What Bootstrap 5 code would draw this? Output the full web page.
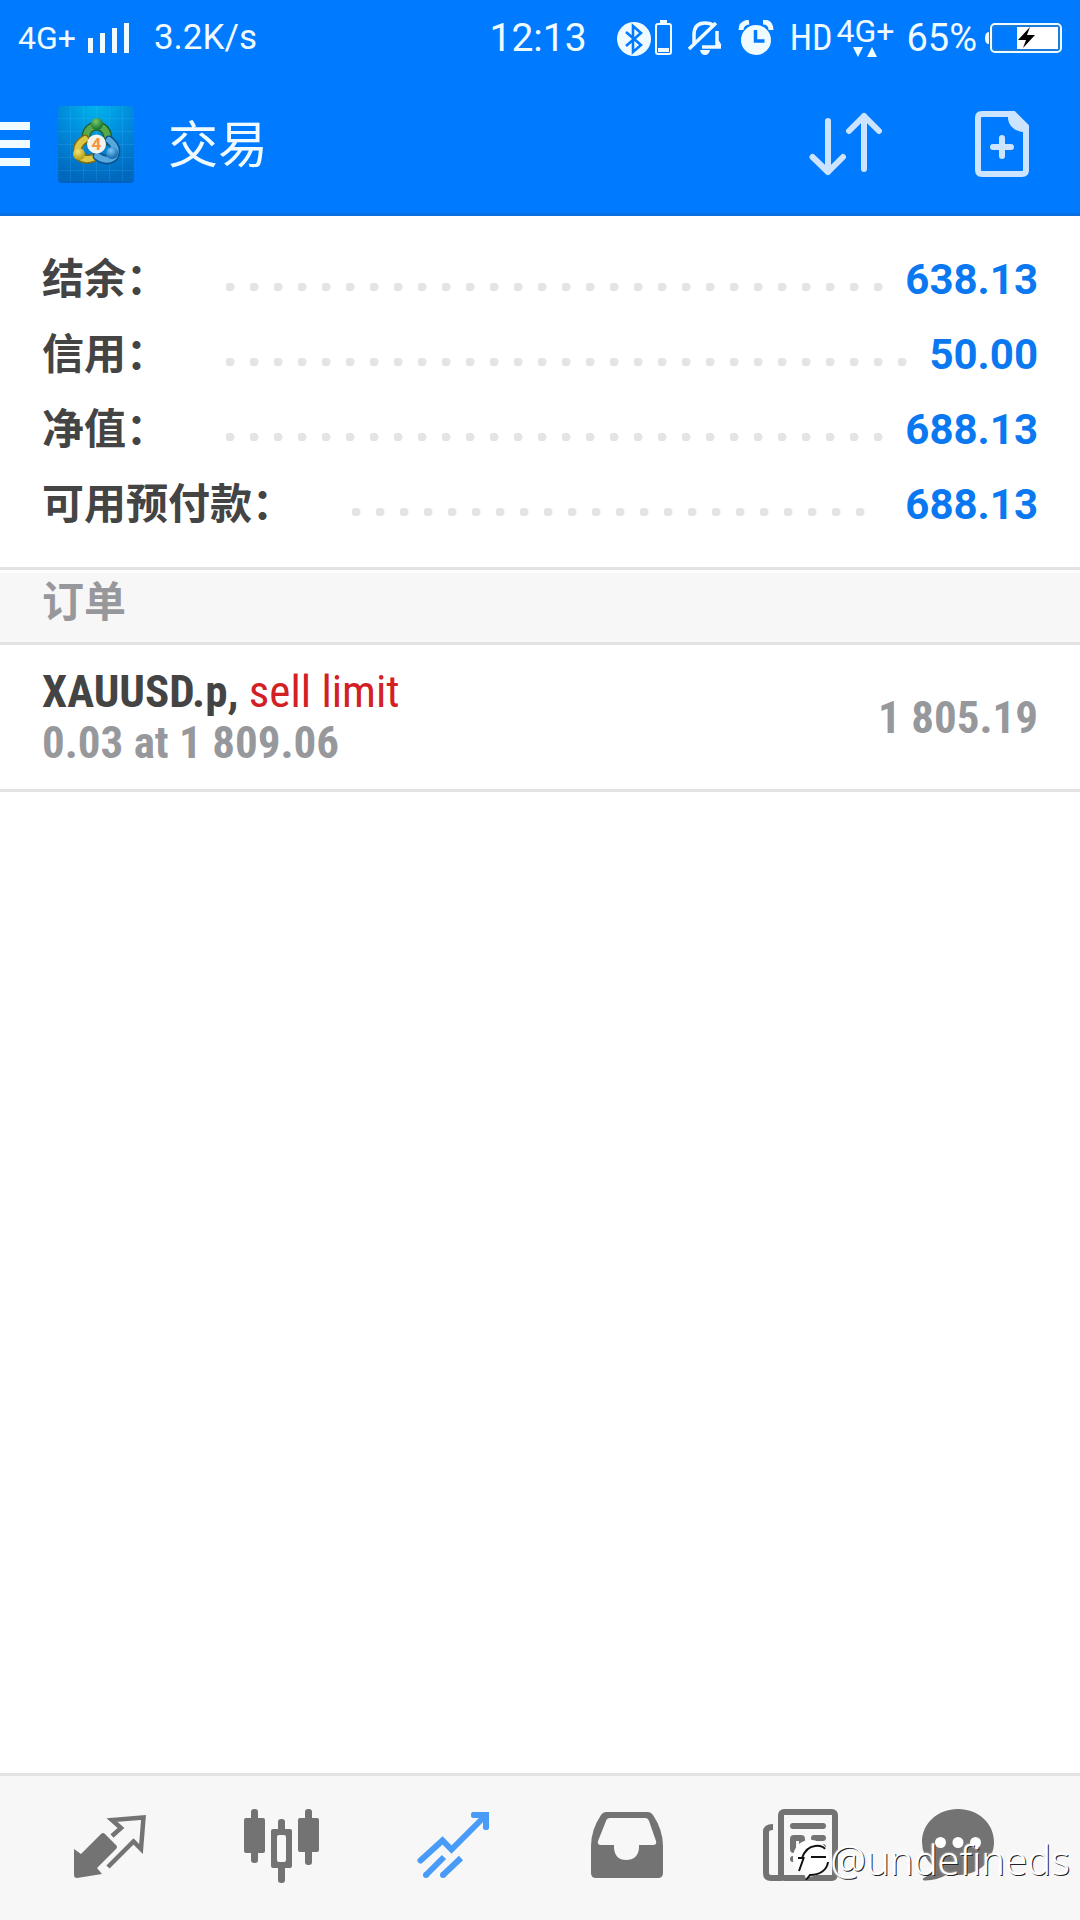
<!DOCTYPE html>
<html lang="zh-CN">
<head>
<meta charset="utf-8">
<meta name="viewport" content="width=device-width, initial-scale=1">
<title>交易</title>
<link rel="stylesheet" href="https://cdn.jsdelivr.net/npm/bootstrap@5.3.0/dist/css/bootstrap.min.css">
<style>
body{font-family:Roboto,"Noto Sans CJK SC",sans-serif;color:#444;background:#fff}
svg{display:block;flex:none}
.top-area{background:#007aff;border-bottom:3px solid #0a6fe0;color:#f0fbff}
.status-line{height:75px;padding:0 18px;font-size:35px;line-height:40px}
.net-type{font-size:32px;line-height:32px}
.clock-text{font-size:39px;margin-right:30px}
.charge-text{font-size:38px;margin-left:12px}
.hd-text{font-size:36px;font-family:"Roboto Condensed","Liberation Sans Narrow",Roboto,sans-serif;font-weight:400}
.title-line{height:138px;padding-right:51px}
.title-line h1{font-size:50px;line-height:72px;font-weight:400;padding:4px 0 0 34px}
.plain-btn{background:none;border:0;padding:0;color:inherit}
.menu-btn{margin-right:28px}
.right-tools{gap:92px;color:#cce4ff}
.summary{padding:26px 42px 25px;border-bottom:3px solid #e3e3e3}
.sum-row{height:75px;font-size:42px;line-height:60px}
.sum-row dt{font-weight:700}
.sum-row dd{color:#0a78f0;font-weight:700}
.dots-wrap{margin:14px 4px 0 58px;height:8px;min-width:0}
.dots{height:8px;width:100%;width:round(down,100%,24px);background:radial-gradient(circle at 4px 4px,#e4e4e4 3px,#e4e4e4 4px,transparent 5px) 0 0/24px 8px repeat-x}
.group-head{background:#f7f7f7;border-top:3px solid #fff;border-bottom:3px solid #e3e3e3;height:75px;padding:0 42px 10px}
.group-head h2{font-size:42px;line-height:59px;font-weight:700;color:#97989c}
.order-row{height:147px;padding:0 42px;border-bottom:3px solid #e3e3e3;font-family:"Roboto Condensed","Liberation Sans Narrow",Roboto,sans-serif;font-size:45px;line-height:51px;font-weight:700}
.muted-num{color:#97989c}
.sell{color:#d32024;font-weight:400}
.tab-bar{height:147px;border-top:3px solid #e3e3e3;background:#f7f7f7;padding:0 24px;color:#737373}
.tab-bar a{color:inherit}
.tab-bar a.current{color:#489cf7}
.watermark{right:10px;bottom:34px;font-family:"Noto Sans","Open Sans",sans-serif;font-weight:300;font-size:40px;line-height:52px;color:#fff;text-shadow:1px 1px 0 #222,0 0 2px #fff;pointer-events:none}
</style>
</head>
<body class="d-flex flex-column min-vh-100">
<header class="top-area">
  <div class="status-line d-flex align-items-center">
    <span class="net-type">4G+</span>
    <svg class="ms-2" width="46" height="30" viewBox="0 0 46 30" fill="currentColor"><path d="M4 15h5v15H4zM16 10h5v20h-5zM28 5h5v25h-5zM40 0h5v30h-5z"/></svg>
    <span class="ms-4">3.2K/s</span>
    <span class="clock-text ms-auto">12:13</span>
    <svg width="157" height="36" viewBox="0 0 157 36" fill="none" stroke="currentColor">
      <circle cx="17" cy="19" r="17" fill="currentColor" stroke="none"/>
      <path d="M9 12l15 13-8 7V6l8 7L9 26" stroke="#007aff" stroke-width="2.6"/>
      <path d="M43 1.500h7" stroke-width="3"/><rect x="39" y="4" width="15" height="30" rx="2" stroke-width="2"/><path d="M41 30h11" stroke-width="4"/>
      <path d="M77 23V15q0-12 11-12 5 0 8 2M100 11v15M85 27h19M100 21l3 5" stroke-width="3.500"/><path d="M72 29L99 3" stroke-width="3.500"/><path d="M83 30h10q-1 5-5 5t-5-5" fill="currentColor" stroke="none"/>
      <circle cx="139" cy="20" r="15" fill="currentColor" stroke="none"/><path d="M124 10q0-7 8-8M146 2q8 0 8 8" stroke-width="5"/><path d="M138.500 10v11h9" stroke="#007aff" stroke-width="3.500"/>
    </svg>
    <span class="hd-text ms-3">HD</span>
    <span class="net-type ms-1 mb-1 d-flex flex-column align-items-center">4G+
      <svg width="24" height="10" viewBox="0 0 24 10" fill="currentColor"><path d="M0 0h10L5 10zM14 10h10L19 0z"/></svg></span>
    <span class="charge-text">65%</span>
    <svg class="ms-2" width="77" height="30" viewBox="0 0 77 30"><path d="M4 9q-4 0-4 6t4 6z" fill="currentColor"/><rect x="6" y="1" width="70" height="28" rx="4" fill="none" stroke="currentColor" stroke-width="2"/><rect x="8" y="3" width="66" height="24" rx="2" fill="none" stroke="#397fb0" stroke-width="1"/><path d="M32 4h41v22H32z" fill="#fff"/><path d="M45 4L33 17h8l-3 8 12-13h-8z" fill="#000"/></svg>
  </div>
  <div class="title-line d-flex align-items-center">
    <button class="plain-btn menu-btn" type="button" aria-label="菜单"><svg width="30" height="44" viewBox="0 0 30 44" fill="currentColor"><path d="M0 0h30v8H0zM0 18h30v8H0zM0 36h30v8H0z"/></svg></button>
    <svg width="76" height="77" viewBox="0 0 76 77">
      <defs>
        <radialGradient id="sky" cx=".5" cy="0" r="1"><stop offset="0" stop-color="#00b3ea"/><stop offset=".5" stop-color="#0089dc"/><stop offset="1" stop-color="#0068bd"/></radialGradient>
        <radialGradient id="gr" cx=".4" cy=".3" r=".7"><stop offset="0" stop-color="#79c96b"/><stop offset="1" stop-color="#12702c"/></radialGradient>
        <radialGradient id="ye" cx=".4" cy=".3" r=".7"><stop offset="0" stop-color="#f3e576"/><stop offset="1" stop-color="#b39a12"/></radialGradient>
        <radialGradient id="bl" cx=".4" cy=".3" r=".7"><stop offset="0" stop-color="#7cc8f4"/><stop offset="1" stop-color="#0f66ad"/></radialGradient>
      </defs>
      <rect y="2" width="76" height="75" rx="4" fill="#0060bd"/><rect width="76" height="75" rx="4" fill="url(#sky)"/>
      <path d="M12.500 0v75M25.500 0v75M38.500 0v75M51.500 0v75M64.500 0v75M0 12.500h76M0 25.500h76M0 38.500h76M0 51.500h76M0 64.500h76" stroke="#5cc4f5" stroke-opacity=".16"/>
      <g fill="none" stroke-linecap="round">
        <path d="M28 34q-1-13 11-14 11 1 11 15" stroke="#1c6428" stroke-width="9"/><path d="M28 34q-1-13 11-14 11 1 11 15" stroke="#58a94d" stroke-width="6"/>
        <path d="M27 33q-11 7-6 17 5 5 14 2" stroke="#806d12" stroke-width="9"/><path d="M27 33q-11 7-6 17 5 5 14 2" stroke="#dcc646" stroke-width="6"/>
        <path d="M51 34q10 8 5 17-7 6-17-1" stroke="#0b518d" stroke-width="9"/><path d="M51 34q10 8 5 17-7 6-17-1" stroke="#55a9df" stroke-width="6"/>
      </g>
      <circle cx="39" cy="18" r="6" fill="url(#gr)"/><circle cx="21" cy="48" r="6" fill="url(#ye)"/><circle cx="54" cy="47" r="6" fill="url(#bl)"/>
      <circle cx="38.500" cy="38" r="9.500" fill="#f2f2ee"/>
      <text x="38.500" y="44" text-anchor="middle" font-family="Roboto,sans-serif" font-weight="700" font-size="17" fill="#f5933f">4</text>
    </svg>
    <h1 class="m-0">交易</h1>
    <div class="right-tools d-flex align-items-center ms-auto">
      <button class="plain-btn" type="button" aria-label="排序"><svg width="74" height="66" viewBox="0 0 74 66" fill="none" stroke="currentColor" stroke-width="6" stroke-linecap="round" stroke-linejoin="round"><path d="M19 10v51M3.500 46L19 61l15-15M55 58V5M40 20L55 5l15 15"/></svg></button>
      <button class="plain-btn" type="button" aria-label="新订单"><svg width="54" height="66" viewBox="0 0 54 66" fill="none" stroke="currentColor"><path d="M7 3h31.500L51 15.500V59q0 4-4 4H7q-4 0-4-4V7q0-4 4-4z" stroke-width="6"/><path d="M33 3h7l12 12v6q-8 1-14-4-6-5-5-14z" fill="currentColor" stroke="none"/><path d="M27 27v18M18 36h18" stroke-width="6" stroke-linecap="round"/></svg></button>
    </div>
  </div>
</header>
<main class="flex-grow-1">
  <dl class="summary m-0">
    <div class="sum-row d-flex align-items-center"><dt>结余：</dt><div class="dots-wrap flex-grow-1"><div class="dots"></div></div><dd class="m-0">638.13</dd></div>
    <div class="sum-row d-flex align-items-center"><dt>信用：</dt><div class="dots-wrap flex-grow-1"><div class="dots"></div></div><dd class="m-0">50.00</dd></div>
    <div class="sum-row d-flex align-items-center"><dt>净值：</dt><div class="dots-wrap flex-grow-1"><div class="dots"></div></div><dd class="m-0">688.13</dd></div>
    <div class="sum-row d-flex align-items-center"><dt>可用预付款：</dt><div class="dots-wrap flex-grow-1"><div class="dots"></div></div><dd class="m-0">688.13</dd></div>
  </dl>
  <div class="group-head"><h2 class="m-0">订单</h2></div>
  <div class="order-row d-flex align-items-center justify-content-between">
    <div><div>XAUUSD.p, <span class="sell">sell limit</span></div><div class="muted-num">0.03 at 1 809.06</div></div>
    <div class="muted-num">1 805.19</div>
  </div>
</main>
<nav class="tab-bar d-flex align-items-center position-relative">
  <a href="#" class="d-flex justify-content-center flex-fill" aria-label="行情"><svg width="96" height="96" viewBox="0 0 96 96"><path d="M12 49l7 5 20-20q2-2 4 0l11 11q2 2 0 4L35 68l5 6-25 4q-3 0-3-3z" fill="currentColor"/><path d="M50 36l9-8-9-8 31.500-2.500L79 49l-7.500-7.500L46 67" fill="none" stroke="currentColor" stroke-width="4.500"/></svg></a>
  <a href="#" class="d-flex justify-content-center flex-fill" aria-label="图表"><svg width="96" height="96" viewBox="0 0 96 96" fill="currentColor"><rect x="10" y="18" width="21" height="35" rx="2"/><rect x="17" y="9" width="7" height="54" rx="3"/><rect x="64" y="18" width="21" height="34" rx="2"/><rect x="71" y="9" width="7" height="56" rx="3"/><rect x="44" y="19" width="7" height="14" rx="3"/><rect x="44" y="64" width="7" height="19" rx="3"/><path fill-rule="evenodd" d="M39 29h17q2 0 2 2v35q0 2-2 2H39q-2 0-2-2V31q0-2 2-2zm6 6q-2 0-2 2v23q0 2 2 2h5q2 0 2-2V37q0-2-2-2z"/></svg></a>
  <a href="#" class="current d-flex justify-content-center flex-fill" aria-label="交易"><svg width="96" height="96" viewBox="0 0 96 96" fill="none" stroke="currentColor" stroke-width="6"><path d="M14.500 60.500l22-20 9 9L79 16M68 15h12v12" stroke-linecap="round"/><path d="M68 15h12v12" stroke-linecap="round" stroke-linejoin="round"/><path d="M20 75l18-18M37 75l18-17"/><g fill="currentColor" stroke="none"><circle cx="20" cy="75" r="3"/><circle cx="37" cy="75" r="3"/></g></svg></a>
  <a href="#" class="d-flex justify-content-center flex-fill" aria-label="历史"><svg width="96" height="96" viewBox="0 0 96 96" fill="currentColor"><path fill-rule="evenodd" d="M28 12h42q3 0 5 3 10 15 10 31v27q0 5-5 5H18q-5 0-5-5V46q0-16 10-31 2-3 5-3zm4 6q-3 0-4 3l-8 20q-1 4 3 4h13v3q1 12 12 12 12 0 13-12v-3h14q4 0 3-4l-7-20q-1-3-4-3z"/></svg></a>
  <a href="#" class="d-flex justify-content-center flex-fill" aria-label="新闻"><svg width="96" height="96" viewBox="0 0 96 96" fill="none" stroke="currentColor" stroke-width="6"><rect x="31" y="12" width="54" height="66" rx="3"/><path d="M23 27q-7 0-7 5v41q0 5 5 5h11"/><path d="M43 26h30M64 38h9M64 47h9" stroke-linecap="round"/><rect x="43" y="38" width="9" height="12" rx="1"/><path d="M43 59h30" stroke-linecap="round"/></svg></a>
  <a href="#" class="d-flex justify-content-center flex-fill" aria-label="消息"><svg width="96" height="96" viewBox="0 0 96 96"><path d="M36 9c20 0 36 14 36 33S56 75 37 75q-6 0-11-1Q14 81 2 80.500q-2-1-1-2Q10 74 11 66 0 56 0 42C0 23 16 9 36 9z" fill="currentColor"/><g fill="#fff"><circle cx="18.500" cy="42.500" r="5.500"/><circle cx="36" cy="42.500" r="5.500"/><circle cx="53.500" cy="42.500" r="5.500"/></g></svg></a>
  <div class="watermark position-absolute d-flex align-items-center">
    <svg width="38" height="44" viewBox="0 0 38 44"><path d="M18 2c12 0 19 8 19 18 0 9-7 18-21 19l-1 4-3-7C3 33 1 27 1 20 1 10 8 2 18 2z" fill="#fff"/><path d="M36 24c-1 8-8 13-18 13l-4 5M7 33l5-14M6 20h4q4-11 13-12 7-1 10 3M19 19h15" fill="none" stroke="#111" stroke-width="2"/></svg>
    <span>@undefineds</span>
  </div>
</nav>
<script src="https://cdn.jsdelivr.net/npm/bootstrap@5.3.0/dist/js/bootstrap.bundle.min.js"></script>
</body>
</html>
